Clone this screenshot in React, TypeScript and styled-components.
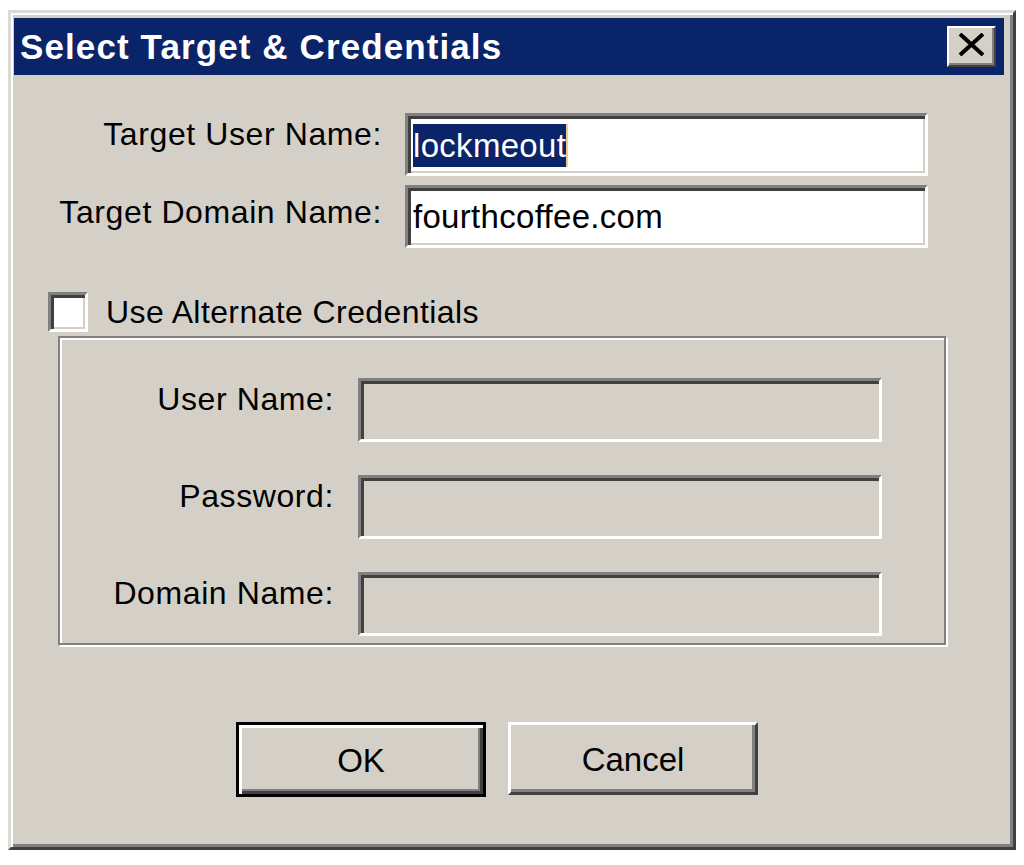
import React from "react";
import styled, { createGlobalStyle } from "styled-components";

const GlobalStyle = createGlobalStyle`
  html, body {
    margin: 0;
    padding: 0;
    background: #ffffff;
  }
  body {
    font-family: "Liberation Sans", Arial, sans-serif;
    color: #000;
  }
`;

const Window = styled.div`
  box-sizing: border-box;
  margin: 10px 0 0 8px;
  width: 1008px;
  height: 840px;
  background: #d4d0c8;
  border-style: solid;
  border-width: 3px;
  border-color: #dcdad4 #404040 #404040 #dcdad4;
  box-shadow: inset 2px 2px 0 #ffffff, inset -3px -3px 0 #808080;
  padding: 5px 9px 0 3px;
  display: flex;
  flex-direction: column;
`;

const TitleBar = styled.div`
  height: 57px;
  flex: none;
  background: #0a246a;
  display: flex;
  align-items: center;
  justify-content: space-between;
  padding: 0 6px;
`;

const Title = styled.div`
  color: #ffffff;
  font-weight: bold;
  font-size: 35px;
  letter-spacing: 1.1px;
  line-height: 40px;
  padding-top: 1px;
`;

const CloseButton = styled.div`
  box-sizing: border-box;
  width: 49px;
  height: 41px;
  background: #d4d0c8;
  border-style: solid;
  border-width: 2px;
  border-color: #ffffff #404040 #404040 #ffffff;
  box-shadow: inset -2px -2px 0 #808080;
  display: flex;
  align-items: flex-start;
  justify-content: center;
  padding-top: 5px;
  margin-right: 2px;
`;

const Body = styled.div`
  display: flex;
  flex-direction: column;
  padding-top: 38px;
`;

const FieldGrid = styled.div<{ $cols: string; $gap: number; $rowGap: number; $rowH: number }>`
  display: grid;
  grid-template-columns: ${(p) => p.$cols};
  column-gap: ${(p) => p.$gap}px;
  row-gap: ${(p) => p.$rowGap}px;
  grid-auto-rows: ${(p) => p.$rowH}px;
`;

const Label = styled.div<{ $top: number }>`
  text-align: right;
  font-size: 32px;
  letter-spacing: 0.6px;
  line-height: 36px;
  padding-top: ${(p) => p.$top}px;
  white-space: nowrap;
`;

const TextBox = styled.div<{ $disabled?: boolean }>`
  box-sizing: border-box;
  height: 100%;
  background: ${(p) => (p.$disabled ? "#d4d0c8" : "#ffffff")};
  border-style: solid;
  border-width: 3px;
  border-color: #808080 #ffffff #ffffff #808080;
  box-shadow: inset 3px 3px 0 #404040, inset -2px -2px 0 #d4d0c8;
  padding: 3px 0 0 5px;
  font-size: 33px;
  letter-spacing: 0.3px;
  line-height: 51px;
  white-space: nowrap;
  overflow: hidden;
`;

const Selected = styled.span`
  display: inline-block;
  background: #0a246a;
  color: #ffffff;
  height: 43px;
  line-height: 43px;
  vertical-align: middle;
  border-right: 2px solid #e9cf8c;
  margin-top: -4px;
`;

const CheckRow = styled.div`
  display: flex;
  align-items: center;
  gap: 18px;
  margin-top: 44px;
  padding-left: 34px;
  height: 40px;
`;

const CheckBox = styled.div`
  box-sizing: border-box;
  width: 40px;
  height: 40px;
  background: #ffffff;
  border-style: solid;
  border-width: 3px;
  border-color: #808080 #ffffff #ffffff #808080;
  box-shadow: inset 3px 3px 0 #404040, inset -2px -2px 0 #d4d0c8;
`;

const CheckLabel = styled.span`
  font-size: 32px;
  letter-spacing: 0.4px;
  line-height: 40px;
`;

const GroupBox = styled.div`
  box-sizing: border-box;
  margin: 4px 0 0 44px;
  width: 888px;
  height: 309px;
  border: 2px solid #808080;
  box-shadow: inset 2px 2px 0 #ffffff, 2px 2px 0 #ffffff;
  padding-top: 40px;
`;

const ButtonRow = styled.div`
  display: flex;
  gap: 22px;
  margin-top: 77px;
  padding-left: 222px;
`;

const Button = styled.div<{ $default?: boolean }>`
  box-sizing: border-box;
  width: 250px;
  height: ${(p) => (p.$default ? 75 : 73)}px;
  background: #d4d0c8;
  display: flex;
  align-items: center;
  justify-content: center;
  font-size: 33px;
  border-style: solid;
  border-width: 3px;
  border-color: ${(p) =>
    p.$default ? "#000000" : "#ffffff #404040 #404040 #ffffff"};
  box-shadow: ${(p) =>
    p.$default
      ? "inset 3px 3px 0 #ffffff, inset -3px -3px 0 #404040, inset -5px -5px 0 #808080"
      : "inset -3px -3px 0 #808080"};
  padding-top: 2px;
`;

const CloseGlyph = () => (
  <svg width="27" height="23" viewBox="0 0 27 23">
    <path d="M2 1 L25 22 M25 1 L2 22" stroke="#000" strokeWidth="4" fill="none" />
  </svg>
);

export default function App() {
  return (
    <>
      <GlobalStyle />
      <Window>
        <TitleBar>
          <Title>Select Target &amp; Credentials</Title>
          <CloseButton>
            <CloseGlyph />
          </CloseButton>
        </TitleBar>
        <Body>
          <FieldGrid $cols="368px 523px" $gap={23} $rowGap={9} $rowH={63}>
            <Label $top={3}>Target User Name:</Label>
            <TextBox>
              <Selected>lockmeout</Selected>
            </TextBox>
            <Label $top={9}>Target Domain Name:</Label>
            <TextBox>fourthcoffee.com</TextBox>
          </FieldGrid>
          <CheckRow>
            <CheckBox />
            <CheckLabel>Use Alternate Credentials</CheckLabel>
          </CheckRow>
          <GroupBox>
            <FieldGrid $cols="274px 524px" $gap={24} $rowGap={33} $rowH={64}>
              <Label $top={3}>User Name:</Label>
              <TextBox $disabled />
              <Label $top={3}>Password:</Label>
              <TextBox $disabled />
              <Label $top={3}>Domain Name:</Label>
              <TextBox $disabled />
            </FieldGrid>
          </GroupBox>
          <ButtonRow>
            <Button $default>OK</Button>
            <Button>Cancel</Button>
          </ButtonRow>
        </Body>
      </Window>
    </>
  );
}
